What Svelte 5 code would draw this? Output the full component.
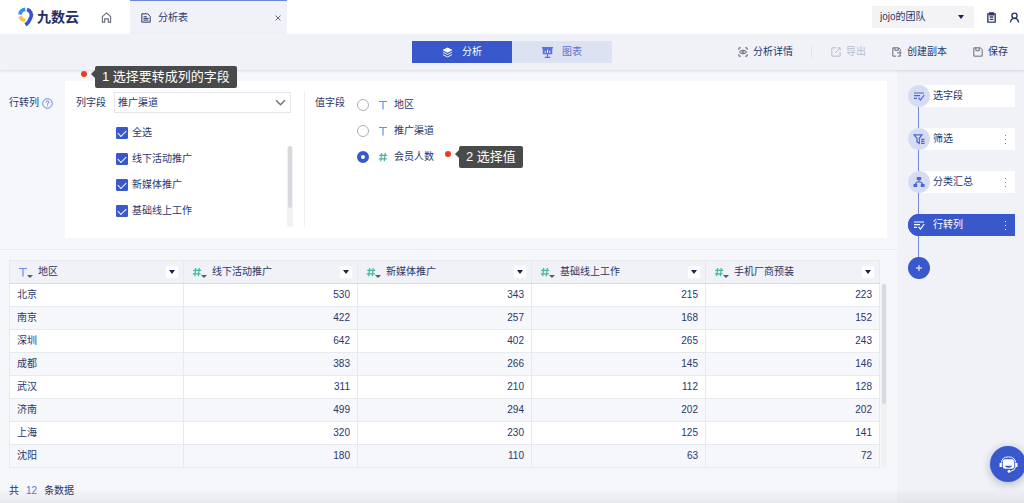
<script>
  const actions = [
    { id: 'detail', label: '分析详情' },
    { id: 'export', label: '导出', disabled: true },
    { id: 'copy', label: '创建副本' },
    { id: 'save', label: '保存' }
  ];

  const valueFields = [
    { label: '地区', type: 'text' },
    { label: '推广渠道', type: 'text' },
    { label: '会员人数', type: 'number' }
  ];

  const columns = [
    { label: '地区', type: 'text' },
    { label: '线下活动推广', type: 'number' },
    { label: '新媒体推广', type: 'number' },
    { label: '基础线上工作', type: 'number' },
    { label: '手机厂商预装', type: 'number' }
  ];

  const rows = [
    ['北京', 530, 343, 215, 223],
    ['南京', 422, 257, 168, 152],
    ['深圳', 642, 402, 265, 243],
    ['成都', 383, 266, 145, 146],
    ['武汉', 311, 210, 112, 128],
    ['济南', 499, 294, 202, 202],
    ['上海', 320, 230, 125, 141],
    ['沈阳', 180, 110, 63, 72]
  ];

  const steps = [
    { label: '选字段', icon: 'edit', menu: false },
    { label: '筛选', icon: 'filter', menu: true },
    { label: '分类汇总', icon: 'group', menu: true },
    { label: '行转列', icon: 'edit', menu: true }
  ];

  let options = $state([
    { label: '全选', checked: true },
    { label: '线下活动推广', checked: true },
    { label: '新媒体推广', checked: true },
    { label: '基础线上工作', checked: true }
  ]);
  let valueField = $state('会员人数');
  let view = $state('analysis');
  let activeStep = $state(3);
</script>

{#snippet typeIcon(type)}
  {#if type === 'text'}
    <svg class="type text" viewBox="0 0 10 10" aria-hidden="true"><path d="M1 1.5h8M5 1.5v8" /></svg>
  {:else}
    <svg class="type number" viewBox="0 0 10 10" aria-hidden="true"><path d="M3.7 1 2.7 9.3M7.3 1 6.3 9.3M1.2 3.3h8M.8 6.8h8" /></svg>
  {/if}
{/snippet}

{#snippet actionIcon(id)}
  <svg class="icon" viewBox="0 0 12 12" aria-hidden="true">
    {#if id === 'detail'}
      <path d="M1 3.5V1h2.5M8.5 1H11v2.5M11 8.5V11H8.5M3.5 11H1V8.5M1.5 6Q6 1.5 10.5 6Q6 10.5 1.5 6z" />
      <circle cx="6" cy="6" r="1.3" />
    {:else if id === 'export'}
      <path d="M6 1H1v10h10V6M8 1h3v3M11 1 5 7" />
    {:else if id === 'copy'}
      <path d="M5 11H1V1h7l2 2v2M3.5 1v3h4V1M6 7h5M9 5l2 2-2 2M10 9v2H7" />
    {:else}
      <path d="M1 1h8l2 2v8H1zM3.5 1v3.5h4V1" />
    {/if}
  </svg>
{/snippet}

{#snippet stepIcon(icon)}
  <svg class="step-icon" viewBox="0 0 12 12" aria-hidden="true">
    {#if icon === 'edit'}
      <path d="M1 3h10M1 5.7h6M1 8.4h3M5.5 7.8l2 2.2 3.7-5" />
    {:else if icon === 'filter'}
      <path d="M1 1.8h8L6.3 5.3v5L4 8.8V5.3zM8 6.3h3.5M8 8.3h3.5M8 10.3h3.5" />
    {:else}
      <path class="solid" d="M3.8 1h4.400v3H3.800zM.5 8h3.700v3H.5zM7.800 8h3.700v3H7.800z" />
      <path d="M6 4v2M2.2 8l2-2h3.600l2 2" />
    {/if}
  </svg>
{/snippet}

<div class="page">
  <header class="topbar">
    <a class="logo" href="#home">
      <svg viewBox="0 0 16 20" aria-hidden="true">
        <path d="M2 7.600A6 6 0 0 1 7.300 2.400" stroke="#3b8cf0" />
        <path d="M2 9.300A6 6 0 0 0 7.300 13.300" stroke="#f8c13c" />
        <path d="M9 2.400A5.800 5.800 0 0 1 13 10Q11 15.500 7.500 18" stroke="#3656cf" />
      </svg>
      <span>九数云</span>
    </a>
    <a class="home" href="#home" aria-label="首页">
      <svg class="icon" viewBox="0 0 12 12" aria-hidden="true"><path d="M1.500 5 6 1l4.500 4v6h-2.500V7.500h-4V11H1.500z" /></svg>
    </a>
    <div class="tab">
      <svg class="icon" viewBox="0 0 12 12" aria-hidden="true"><path d="M1 1h7l3 3v7H1zM3 4.500h4M3 6.500h6M3 8.500h6" /></svg>
      <span>分析表</span>
      <button aria-label="关闭">
        <svg viewBox="0 0 8 8" aria-hidden="true"><path d="m1.500 1.500 5 5M6.500 1.500l-5 5" /></svg>
      </button>
    </div>
    <div class="account">
      <div class="team">
        <select aria-label="团队"><option>jojo的团队</option></select>
        <i class="caret"></i>
      </div>
      <button aria-label="任务">
        <svg class="icon" viewBox="0 0 12 12" aria-hidden="true"><path d="M2 2h8v9H2zM4 1h4v2H4zM4 5.500h4M4 8h4" /></svg>
      </button>
      <button aria-label="我的">
        <svg class="icon" viewBox="0 0 12 12" aria-hidden="true"><circle cx="6" cy="4" r="2.800" /><path d="M1.500 11.500Q2 7 6 7t4.500 4.500" /></svg>
      </button>
    </div>
  </header>

  <div class="toolbar">
    <div class="switch">
      <button class:active={view === 'analysis'} onclick={() => (view = 'analysis')}>
        <svg viewBox="0 0 12 12" aria-hidden="true">
          <path class="solid" d="M6 .5 11.500 3.300 6 6.200.5 3.300z" />
          <path d="M1 5.500 6 8.200l5-2.700M1 8.200l5 2.700 5-2.700" />
        </svg>
        分析
      </button>
      <button class:active={view === 'chart'} onclick={() => (view = 'chart')}>
        <svg viewBox="0 0 12 12" aria-hidden="true">
          <path class="solid" d="M0 0h12v1.500h-.8V8H.8V1.500H0zM5.300 8h1.400v2.500H9V12H3v-1.500h2.300z" />
          <path class="bars" d="M3.500 6.500V4.500M6 6.500V3M8.500 6.500V4" />
        </svg>
        图表
      </button>
    </div>
    <div class="actions">
      {#each actions as action}
        <button class={action.id} disabled={action.disabled}>
          {@render actionIcon(action.id)}{action.label}
        </button>
      {/each}
    </div>
  </div>

  <div class="body">
    <main>
      <section class="config">
        <h2>
          行转列
          <svg viewBox="0 0 12 12" aria-hidden="true"><circle cx="6" cy="6" r="5.200" /><path d="M4.300 4.900Q4.400 3.300 6 3.300t1.700 1.500Q7.700 5.600 6 6.300V7.200M6 8.200v1" /></svg>
        </h2>
        <div class="panel">
          <div class="column-field">
            <label for="column">列字段</label>
            <div class="select">
              <select id="column"><option>推广渠道</option></select>
              <svg viewBox="0 0 10 10" aria-hidden="true"><path d="m1 3 4 4 4-4" /></svg>
            </div>
            <div class="options">
              {#each options as option}
                <label><input type="checkbox" bind:checked={option.checked} />{option.label}</label>
              {/each}
              <div class="scroll"></div>
            </div>
          </div>
          <fieldset class="value-field">
            <legend>值字段</legend>
            <div>
              {#each valueFields as field}
                <label>
                  <input type="radio" name="value" value={field.label} bind:group={valueField} />
                  {@render typeIcon(field.type)}{field.label}
                </label>
              {/each}
            </div>
            <div class="tip tip-value">2 选择值</div>
          </fieldset>
        </div>
        <div class="tip tip-column">1 选择要转成列的字段</div>
      </section>

      <section class="data">
        <table>
          <thead>
            <tr>
              {#each columns as column}
                <th>
                  <div>
                    {@render typeIcon(column.type)}<i class="caret small"></i>
                    <span>{column.label}</span>
                    <button aria-label="{column.label}菜单"><i class="caret"></i></button>
                  </div>
                </th>
              {/each}
            </tr>
          </thead>
          <tbody>
            {#each rows as row}
              <tr>
                {#each row as cell}
                  <td>{cell}</td>
                {/each}
              </tr>
            {/each}
          </tbody>
        </table>
        <div class="scroll"></div>
      </section>
      <footer>共<b>12</b>条数据</footer>
    </main>

    <aside>
      <ol>
        {#each steps as step, i}
          <li class:active={activeStep === i}>
            <button class="step" onclick={() => (activeStep = i)}>
              <span class="badge">{@render stepIcon(step.icon)}</span>{step.label}
            </button>
            {#if step.menu}
              <button class="more" aria-label="更多"><i></i><i></i><i></i></button>
            {/if}
          </li>
        {/each}
      </ol>
      <button class="add" aria-label="添加步骤">
        <svg viewBox="0 0 8 8" aria-hidden="true"><path d="M4 1v6M1 4h6" /></svg>
      </button>
    </aside>
  </div>

  <button class="service" aria-label="客服">
    <svg viewBox="0 0 20 20" aria-hidden="true">
      <path class="solid" d="M6 4.500h8q2 0 2 2V12q0 2.500-2.500 2.500h-7Q4 14.500 4 12V6.500q0-2 2-2z" />
      <path d="M2.500 8Q3 2 10 2t7.500 6" />
      <path class="ears" d="M1.800 8.500v4M18.200 8.500v4" />
      <path d="M17.500 12.500q-1 4.500-6 4.800" />
      <path class="mouth" d="M6 11.300h8q-1 2-4 2t-4-2z" />
      <circle class="solid" cx="10.500" cy="17.300" r="1.500" />
    </svg>
  </button>
</div>

<style>
  :global(body) {
    margin: 0;
    background: #f6f7fa;
  }

  .page {
    --blue: #3858cc;
    --ink: #28366b;
    --tint: #f0f2f7;
    --line: #e6e9ee;
    position: relative;
    display: flex;
    flex-direction: column;
    min-height: 100vh;
    overflow: hidden;
    color: var(--ink);
    font: 10px/14px "Liberation Sans", "Noto Sans CJK SC", sans-serif;
  }
  .page::after {
    content: '';
    position: absolute;
    inset: auto 0 0;
    height: 14px;
    background: linear-gradient(transparent, rgba(0, 0, 0, 0.06));
    pointer-events: none;
  }

  * {
    box-sizing: border-box;
  }
  button,
  select,
  input {
    margin: 0;
    padding: 0;
    border: 0;
    background: none;
    color: inherit;
    font: inherit;
    appearance: none;
  }
  svg {
    flex: none;
    display: block;
    fill: none;
    stroke: currentColor;
  }
  .solid {
    fill: currentColor;
    stroke: none;
  }
  .icon {
    width: 10px;
    height: 10px;
    stroke-width: 1.2;
  }
  .caret {
    border: 3px solid transparent;
    border-top: 4px solid #172353;
    border-bottom: 0;
  }

  .topbar {
    display: flex;
    height: 34px;
    background: #fff;
  }
  .logo {
    display: flex;
    align-items: center;
    gap: 3px;
    margin-left: 18px;
    color: #222d60;
    font-size: 14px;
    font-weight: bold;
    text-decoration: none;
  }
  .logo svg {
    width: 16px;
    height: 20px;
    stroke-width: 3.6;
  }
  .home {
    display: flex;
    align-items: center;
    padding: 0 18px 0 22px;
    color: #666b78;
  }
  .home .icon,
  .account .icon {
    width: 11px;
    height: 11px;
  }
  .tab {
    display: flex;
    align-items: center;
    gap: 7px;
    width: 157px;
    padding: 0 5px 0 11px;
    border-top: 1px solid #6c86da;
    background: var(--tint);
  }
  .tab button {
    margin-left: auto;
    color: #666b78;
  }
  .tab button svg {
    width: 8px;
    height: 8px;
  }
  .account {
    display: flex;
    align-items: center;
    gap: 12px;
    margin-left: auto;
    padding-right: 4px;
  }
  .account .icon {
    stroke-width: 1.5;
  }
  .team {
    position: relative;
    width: 102px;
  }
  .team select {
    width: 100%;
    height: 22px;
    padding-left: 8px;
    background: #f3f3f6;
  }
  .team .caret {
    position: absolute;
    right: 10px;
    top: 9px;
    pointer-events: none;
  }

  .toolbar {
    position: relative;
    z-index: 1;
    display: grid;
    grid-template-columns: 1fr auto 1fr;
    align-items: center;
    height: 36px;
    background: var(--tint);
    box-shadow: 0 1px 3px rgba(40, 50, 80, 0.14);
  }
  .switch {
    grid-column: 2;
    display: flex;
  }
  .switch button {
    display: flex;
    align-items: center;
    justify-content: center;
    gap: 9px;
    width: 100px;
    height: 22px;
    background: #dde2f2;
    color: #5a72d2;
  }
  .switch button.active {
    background: var(--blue);
    color: #fff;
  }
  .switch svg {
    width: 11px;
    height: 11px;
  }
  .bars {
    stroke: #fff;
  }
  .actions {
    display: flex;
    justify-content: flex-end;
    gap: 26px;
    padding-right: 16px;
  }
  .actions button {
    display: flex;
    align-items: center;
    gap: 5px;
  }
  .actions .icon {
    color: #666b78;
  }
  .actions .detail {
    padding-right: 18px;
    margin-right: -7px;
    border-right: 1px solid #e1e4ea;
  }
  .actions button:disabled,
  .actions button:disabled .icon {
    color: #b7bdce;
  }

  .body {
    flex: 1;
    display: flex;
  }
  main {
    flex: 1;
    min-width: 0;
  }

  .config {
    position: relative;
    display: flex;
    padding: 11px 10px 11px 0;
    border-bottom: 1px solid var(--line);
  }
  h2 {
    display: flex;
    gap: 3px;
    width: 65px;
    margin: 0;
    padding: 15px 0 0 9px;
    font: inherit;
  }
  h2 svg {
    width: 11px;
    height: 11px;
    margin-top: 2px;
    color: #5c79df;
  }
  .panel {
    flex: 1;
    display: flex;
    padding: 11px 10px 11px 11px;
    background: #fff;
  }
  .column-field {
    display: grid;
    grid-template-columns: 38px 177px;
    grid-template-rows: 21px 1fr;
    row-gap: 7px;
    padding-right: 13px;
    border-right: 1px solid #eceef2;
  }
  .column-field > label {
    padding-top: 4px;
  }
  .select {
    position: relative;
  }
  .select select {
    width: 100%;
    height: 21px;
    padding-left: 3px;
    border: 1px solid #e4e6eb;
    background: #fff;
  }
  .select svg {
    position: absolute;
    right: 5px;
    top: 5px;
    width: 11px;
    height: 11px;
    stroke: #6b6f78;
    stroke-width: 1.3;
    pointer-events: none;
  }
  .options {
    position: relative;
    grid-column: 2;
    height: 107px;
    padding-left: 2px;
  }
  .options label,
  .value-field label {
    display: flex;
    align-items: center;
    height: 26px;
  }
  .options label {
    gap: 4px;
  }
  input {
    display: grid;
    place-items: center;
    width: 12px;
    height: 12px;
  }
  input[type='checkbox'] {
    border: 1px solid var(--blue);
    border-radius: 1px;
  }
  input[type='checkbox']:checked {
    background: var(--blue);
  }
  input[type='checkbox']:checked::before {
    content: '';
    width: 7px;
    height: 4px;
    margin-bottom: 2px;
    border: solid #fff;
    border-width: 0 0 1px 1px;
    transform: rotate(-45deg);
  }
  input[type='radio'] {
    border: 1px solid #aab0bc;
    border-radius: 50%;
  }
  input[type='radio']:checked {
    border: 4px solid var(--blue);
  }
  .scroll {
    position: absolute;
    width: 6px;
    border-radius: 3px;
    background: #f0f1f3;
  }
  .scroll::before {
    content: '';
    display: block;
    width: 4px;
    height: 100%;
    margin: auto;
    border-radius: 2px;
    background: #d7d9dd;
  }
  .options .scroll {
    right: -2px;
    top: 26px;
    height: 81px;
  }
  .options .scroll::before {
    height: 62px;
  }

  .value-field {
    position: relative;
    display: flex;
    margin: 0;
    padding: 0 0 0 52px;
    border: 0;
  }
  legend {
    position: absolute;
    left: 10px;
    top: 4px;
    padding: 0;
  }
  .type {
    width: 10px;
    height: 10px;
    stroke-width: 1.2;
  }
  .type.text {
    color: #6f8be6;
  }
  .type.number {
    color: #45b5a0;
  }
  .value-field .type {
    margin: 0 6px 0 9px;
  }

  .tip {
    position: absolute;
    height: 22px;
    padding: 0 7px;
    border-radius: 2px;
    background: #494a4b;
    color: #fff;
    font-size: 13px;
    line-height: 22px;
    white-space: nowrap;
  }
  .tip::before {
    content: '';
    position: absolute;
    left: -4px;
    top: 4px;
    border: 4px solid transparent;
    border-left: 0;
    border-right-color: #494a4b;
  }
  .tip::after {
    content: '';
    position: absolute;
    left: -14px;
    top: 5px;
    width: 6px;
    height: 6px;
    border-radius: 50%;
    background: #ee3a24;
  }
  .tip-column {
    z-index: 2;
    left: 95px;
    top: -4px;
  }
  .tip-value {
    left: 154px;
    top: 54px;
  }

  .data {
    position: relative;
    margin: 10px 17px 0 9px;
  }
  table {
    width: 100%;
    border-collapse: collapse;
    table-layout: fixed;
  }
  th,
  td {
    height: 23px;
    padding: 0 7px;
    border: 1px solid var(--line);
    text-align: right;
  }
  th {
    padding: 0 5px 0 8px;
    border-bottom-color: #d5dae3;
    background: var(--tint);
    font-weight: normal;
  }
  th div {
    display: flex;
    align-items: center;
  }
  th .small {
    border-width: 3px 3px 0;
    border-top-color: #555b68;
    margin: 8px 5px 0 -1px;
  }
  th button {
    display: grid;
    place-items: center;
    width: 12px;
    height: 12px;
    margin-left: auto;
    background: #fff;
  }
  td:first-child {
    text-align: left;
  }
  tbody tr {
    background: #fff;
  }
  tbody tr:nth-child(even) {
    background: #f6f7fa;
  }
  .data .scroll {
    left: 100%;
    top: 24px;
    bottom: 0;
    margin-left: 1px;
  }
  .data .scroll::before {
    height: 120px;
  }
  footer {
    padding: 16px 9px 5px;
  }
  footer b {
    margin: 0 7px;
    color: #5674dc;
    font-weight: normal;
  }

  aside {
    width: 127px;
    padding: 15px 9px 0 11px;
    background: var(--tint);
  }
  ol {
    margin: 0;
    padding: 0;
    list-style: none;
  }
  li {
    position: relative;
    display: flex;
    height: 22px;
    margin-bottom: 21px;
    border-radius: 11px 0 0 11px;
    background: #fff;
  }
  li::after {
    content: '';
    position: absolute;
    left: 10px;
    top: 22px;
    width: 1px;
    height: 21px;
    background: #7087da;
  }
  .step {
    flex: 1;
    display: flex;
    align-items: center;
    gap: 3px;
  }
  .badge {
    display: grid;
    place-items: center;
    width: 22px;
    height: 22px;
    border-radius: 50%;
    background: #d6dcf4;
    color: #4a66d3;
  }
  .step-icon {
    width: 12px;
    height: 12px;
    stroke-width: 1.2;
  }
  .active,
  .active .badge {
    background: var(--blue);
    color: #fff;
  }
  .more {
    display: flex;
    flex-direction: column;
    align-items: center;
    justify-content: center;
    gap: 3px;
    width: 19px;
    color: #7c828f;
  }
  .active .more {
    color: #fff;
  }
  .more i {
    width: 1px;
    height: 1px;
    background: currentColor;
  }
  .add {
    display: grid;
    place-items: center;
    width: 22px;
    height: 22px;
    border-radius: 50%;
    background: var(--blue);
    color: #fff;
  }
  .add svg {
    width: 8px;
    height: 8px;
  }

  .service {
    position: fixed;
    right: -2px;
    bottom: 21px;
    display: grid;
    place-items: center;
    width: 36px;
    height: 36px;
    border-radius: 50%;
    background: var(--blue);
    box-shadow: 0 2px 8px rgba(30, 40, 80, 0.3);
    color: #fff;
  }
  .service svg {
    width: 19px;
    height: 19px;
    stroke-width: 1;
  }
  .service .ears {
    stroke-width: 2.4;
  }
  .service .mouth {
    fill: var(--blue);
    stroke: none;
  }
</style>
